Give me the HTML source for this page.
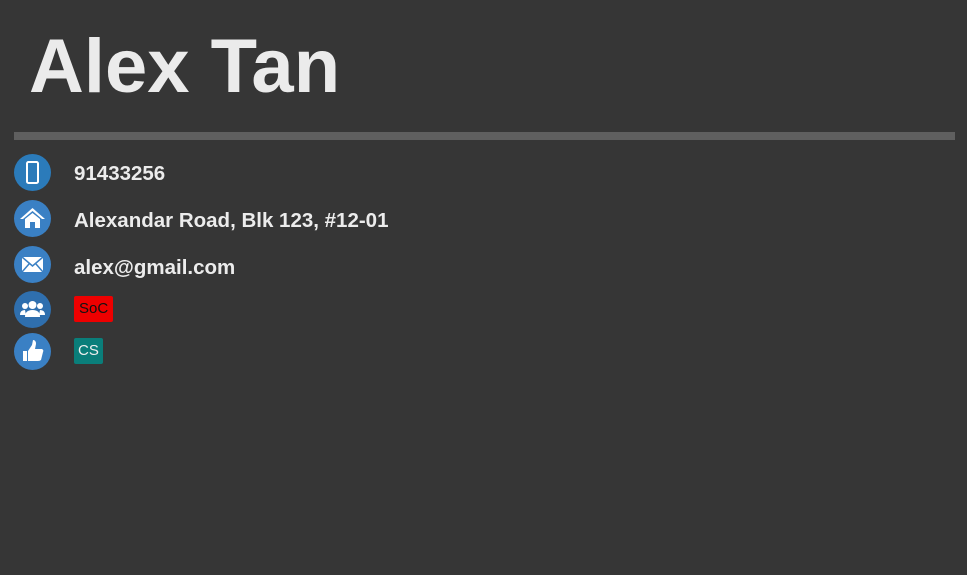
<!DOCTYPE html><html><head><style>
body{margin:0;width:967px;height:575px;background:#363636;font-family:"Liberation Sans",sans-serif;overflow:hidden;position:relative}
h1{position:absolute;left:29px;top:22px;margin:0;font-size:76px;font-weight:bold;color:#ebebeb;line-height:90px;letter-spacing:0px}
.bar{position:absolute;left:14px;top:132px;width:941px;height:8px;background:#5f5f5f}
.ic{position:absolute;left:14px;width:37px;height:37px;border-radius:50%;background:#3a80c4}
.ic svg{position:absolute;left:0;top:0}
.t{position:absolute;left:74px;color:#ececec;font-size:20.5px;font-weight:bold}
.tag{position:absolute;left:74px;font-size:15px;padding:3px 5px;border-radius:2px;line-height:20px}
</style></head><body>
<h1>Alex Tan</h1><div class="bar"></div>
<div class="ic" style="top:154px;background:#2b7bba"><svg width="37" height="37"><rect x="13" y="8" width="11" height="21" rx="1.5" fill="none" stroke="#fff" stroke-width="2"/></svg></div>
<div class="t" style="top:162px">91433256</div>
<div class="ic" style="top:200px"><svg width="37" height="37"><path d="M6 19 L18.5 8 L31 19 L28 19 L18.5 11 L9 19Z M11 19 L18.5 13 L26 19 V28 H21 V22 H16 V28 H11Z" fill="#fff"/></svg></div>
<div class="t" style="top:209px">Alexandar Road, Blk 123, #12-01</div>
<div class="ic" style="top:246px"><svg width="37" height="37"><rect x="8" y="11" width="21" height="15" fill="#fff"/><path d="M8 11 L18.5 20 L29 11 M8 26 L15 18 M29 26 L22 18" stroke="#3a80c4" stroke-width="1.5" fill="none"/></svg></div>
<div class="t" style="top:256px">alex@gmail.com</div>
<div class="ic" style="top:291px;background:#2f6fae"><svg width="37" height="37"><circle cx="18.5" cy="14" r="4" fill="#fff"/><path d="M11 26 Q11 19 18.5 19 Q26 19 26 26Z" fill="#fff"/><circle cx="11" cy="15" r="3" fill="#fff"/><circle cx="26" cy="15" r="3" fill="#fff"/><path d="M6 24 Q6 19 11 19 L12 24Z M31 24 Q31 19 26 19 L25 24Z" fill="#fff"/></svg></div>
<div class="tag" style="top:296px;background:#ee0000;color:#111">SoC</div>
<div class="ic" style="top:333px"><svg width="37" height="37"><rect x="9" y="18" width="4" height="10" fill="#fff"/><path d="M14 18 L18 12 L19 7 Q22 7 22 11 L21 16 H28 Q30 17 29 19 L27 27 Q26 28 24 28 H14Z" fill="#fff"/></svg></div>
<div class="tag" style="top:338px;background:#0a7e7a;color:#eee;padding:3px 4px">CS</div>
</body></html>
